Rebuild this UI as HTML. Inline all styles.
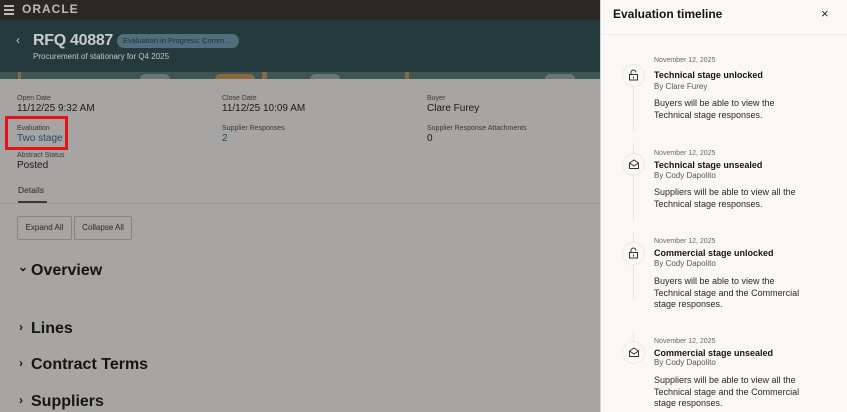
<!DOCTYPE html>
<html><head><meta charset="utf-8"><style>
*{margin:0;padding:0;box-sizing:border-box}
body{width:847px;height:412px;overflow:hidden;position:relative;font-family:"Liberation Sans",sans-serif;background:#a6a5a3;color:#1a1816}
.a{position:absolute;white-space:nowrap}
.lbl{font-size:7px;color:#3a3836}
.val{font-size:10px;color:#1c1a18}
.sec{font-size:16px;font-weight:bold;color:#161412}
.chev{font-size:12px;font-weight:bold;color:#1c1a18}
.btn{position:absolute;top:216px;height:24px;border:1px solid #858482;border-radius:2px;font-size:8px;line-height:22px;text-align:center;color:#2a2826}
.d{font-size:7px;color:#6a6866}
.t{font-size:9px;font-weight:bold;color:#161412}
.b{font-size:8px;color:#5a5856}
.x{font-size:9px;line-height:11.5px;color:#2a2826;white-space:normal;width:153px}
.c{position:absolute;left:622px;width:23px;height:23px;border-radius:50%;border:1px solid #ebe8e5;background:#faf8f6}
.ln{position:absolute;left:633px;width:1px;background:#e6e3e0}
</style></head><body>
<div class="a" style="left:0;top:0;width:600px;height:20px;background:#2a2725"></div>
<div class="a" style="left:4px;top:5px;width:10px;height:1.5px;background:#bbb;box-shadow:0 4px 0 #bbb,0 8px 0 #bbb"></div>
<div class="a" style="left:22px;top:2px;font-size:12px;color:#bdbbb9;letter-spacing:1px;font-weight:bold">ORACLE</div>
<div class="a" style="left:0;top:20px;width:600px;height:59px;background:#253a3c"></div>
<div class="a" style="left:0;top:72px;width:600px;height:7px;overflow:hidden;background:#3d5553">
<div class="a" style="left:18px;top:0;width:3px;height:7px;background:#8a6a3c"></div>
<div class="a" style="left:215px;top:2px;width:40px;height:5px;background:#8a6a3c;border-radius:20px 20px 0 0"></div>
<div class="a" style="left:262px;top:0;width:5px;height:7px;background:#8a6a3c"></div>
<div class="a" style="left:310px;top:2px;width:30px;height:5px;background:#6a7676;border-radius:15px 15px 0 0"></div>
<div class="a" style="left:405px;top:0;width:4px;height:7px;background:#8a6a3c"></div>
<div class="a" style="left:140px;top:2px;width:30px;height:5px;background:#6a7676;border-radius:15px 15px 0 0"></div>
<div class="a" style="left:545px;top:2px;width:30px;height:5px;background:#6a7676;border-radius:15px 15px 0 0"></div>
</div>
<div class="a" style="left:16px;top:33px;font-size:12px;color:#c8c8c8">‹</div>
<div class="a" style="left:33px;top:32px;font-size:16px;font-weight:bold;color:#c9cbcb;letter-spacing:-0.3px">RFQ 40887</div>
<div class="a" style="left:117px;top:34px;width:122px;height:14px;border-radius:7px;background:#4f6f7c;font-size:7.5px;color:#1f2f35;line-height:14px;padding-left:6px">Evaluation in Progress: Comm...</div>
<div class="a" style="left:33px;top:52px;font-size:8px;color:#c4c6c6">Procurement of stationary for Q4 2025</div>

<div class="a lbl" style="left:17px;top:95px">Open Date</div>
<div class="a val" style="left:17px;top:103px">11/12/25 9:32 AM</div>
<div class="a lbl" style="left:222px;top:95px">Close Date</div>
<div class="a val" style="left:222px;top:103px">11/12/25 10:09 AM</div>
<div class="a lbl" style="left:427px;top:95px">Buyer</div>
<div class="a val" style="left:427px;top:103px">Clare Furey</div>
<div class="a lbl" style="left:17px;top:125px">Evaluation</div>
<div class="a val" style="left:17px;top:133px;color:#1f4a62">Two stage</div>
<div class="a" style="left:5px;top:116px;width:63px;height:34px;border:3px solid #e0141b"></div>
<div class="a lbl" style="left:222px;top:125px">Supplier Responses</div>
<div class="a val" style="left:222px;top:133px;color:#1f4a62">2</div>
<div class="a lbl" style="left:427px;top:125px">Supplier Response Attachments</div>
<div class="a val" style="left:427px;top:133px">0</div>
<div class="a lbl" style="left:17px;top:152px">Abstract Status</div>
<div class="a val" style="left:17px;top:160px">Posted</div>
<div class="a" style="left:18px;top:185px;font-size:8.5px;color:#2a2826">Details</div>
<div class="a" style="left:0;top:203px;width:600px;height:1px;background:#9a9997"></div>
<div class="a" style="left:18px;top:201px;width:29px;height:2px;background:#3a3836"></div>
<div class="btn" style="left:17px;width:55px">Expand All</div>
<div class="btn" style="left:74px;width:58px">Collapse All</div>
<div class="a chev" style="left:18px;top:260px">⌄</div>
<div class="a sec" style="left:31px;top:262px">Overview</div>
<div class="a chev" style="left:19px;top:320px">›</div>
<div class="a sec" style="left:31px;top:320px">Lines</div>
<div class="a chev" style="left:19px;top:356px">›</div>
<div class="a sec" style="left:31px;top:356px">Contract Terms</div>
<div class="a chev" style="left:19px;top:393px">›</div>
<div class="a sec" style="left:31px;top:393px">Suppliers</div>

<div class="a" style="left:600px;top:0;width:247px;height:412px;background:#faf8f6;border-left:1px solid #d8d6d4"></div>
<div class="a" style="left:601px;top:34px;width:246px;height:1px;background:#efedeb"></div>
<div class="a" style="left:613px;top:7px;font-size:12px;font-weight:bold;color:#161412">Evaluation timeline</div>
<div class="a" style="left:821px;top:6px;font-size:13px;color:#2a2826">×</div>

<div class="ln" style="top:87px;height:44px"></div>
<div class="ln" style="top:143px;height:78px"></div>
<div class="ln" style="top:232px;height:66px"></div>
<div class="ln" style="top:332px;height:10px"></div>

<div class="c" style="top:64px"></div>
<svg class="a" style="left:628px;top:69px" width="11" height="12"><path d="M3 5.5V3.5a2.5 2.5 0 0 1 5 0" fill="none" stroke="#333" stroke-width="1"/><rect x="1.5" y="5.5" width="8" height="5.5" fill="none" stroke="#333"/><rect x="5" y="7.5" width="1" height="2" fill="#333"/></svg>
<div class="a d" style="left:654px;top:57px">November 12, 2025</div>
<div class="a t" style="left:654px;top:70px">Technical stage unlocked</div>
<div class="a b" style="left:654px;top:82px">By Clare Furey</div>
<div class="a x" style="left:654px;top:98px">Buyers will be able to view the Technical stage responses.</div>

<div class="c" style="top:153px"></div>
<svg class="a" style="left:628px;top:158px" width="12" height="12"><path d="M1.5 5L6 2L10.5 5V10.5H1.5Z M1.5 5L6 8L10.5 5" fill="none" stroke="#333" stroke-width="1"/></svg>
<div class="a d" style="left:654px;top:150px">November 12, 2025</div>
<div class="a t" style="left:654px;top:160px">Technical stage unsealed</div>
<div class="a b" style="left:654px;top:171px">By Cody Dapolito</div>
<div class="a x" style="left:654px;top:187px">Suppliers will be able to view all the Technical stage responses.</div>

<div class="c" style="top:242px"></div>
<svg class="a" style="left:628px;top:247px" width="11" height="12"><path d="M3 5.5V3.5a2.5 2.5 0 0 1 5 0" fill="none" stroke="#333" stroke-width="1"/><rect x="1.5" y="5.5" width="8" height="5.5" fill="none" stroke="#333"/><rect x="5" y="7.5" width="1" height="2" fill="#333"/></svg>
<div class="a d" style="left:654px;top:238px">November 12, 2025</div>
<div class="a t" style="left:654px;top:248px">Commercial stage unlocked</div>
<div class="a b" style="left:654px;top:259px">By Cody Dapolito</div>
<div class="a x" style="left:654px;top:276px">Buyers will be able to view the Technical stage and the Commercial stage responses.</div>

<div class="c" style="top:341px"></div>
<svg class="a" style="left:628px;top:346px" width="12" height="12"><path d="M1.5 5L6 2L10.5 5V10.5H1.5Z M1.5 5L6 8L10.5 5" fill="none" stroke="#333" stroke-width="1"/></svg>
<div class="a d" style="left:654px;top:338px">November 12, 2025</div>
<div class="a t" style="left:654px;top:348px">Commercial stage unsealed</div>
<div class="a b" style="left:654px;top:358px">By Cody Dapolito</div>
<div class="a x" style="left:654px;top:375px">Suppliers will be able to view all the Technical stage and the Commercial stage responses.</div>
</body></html>
